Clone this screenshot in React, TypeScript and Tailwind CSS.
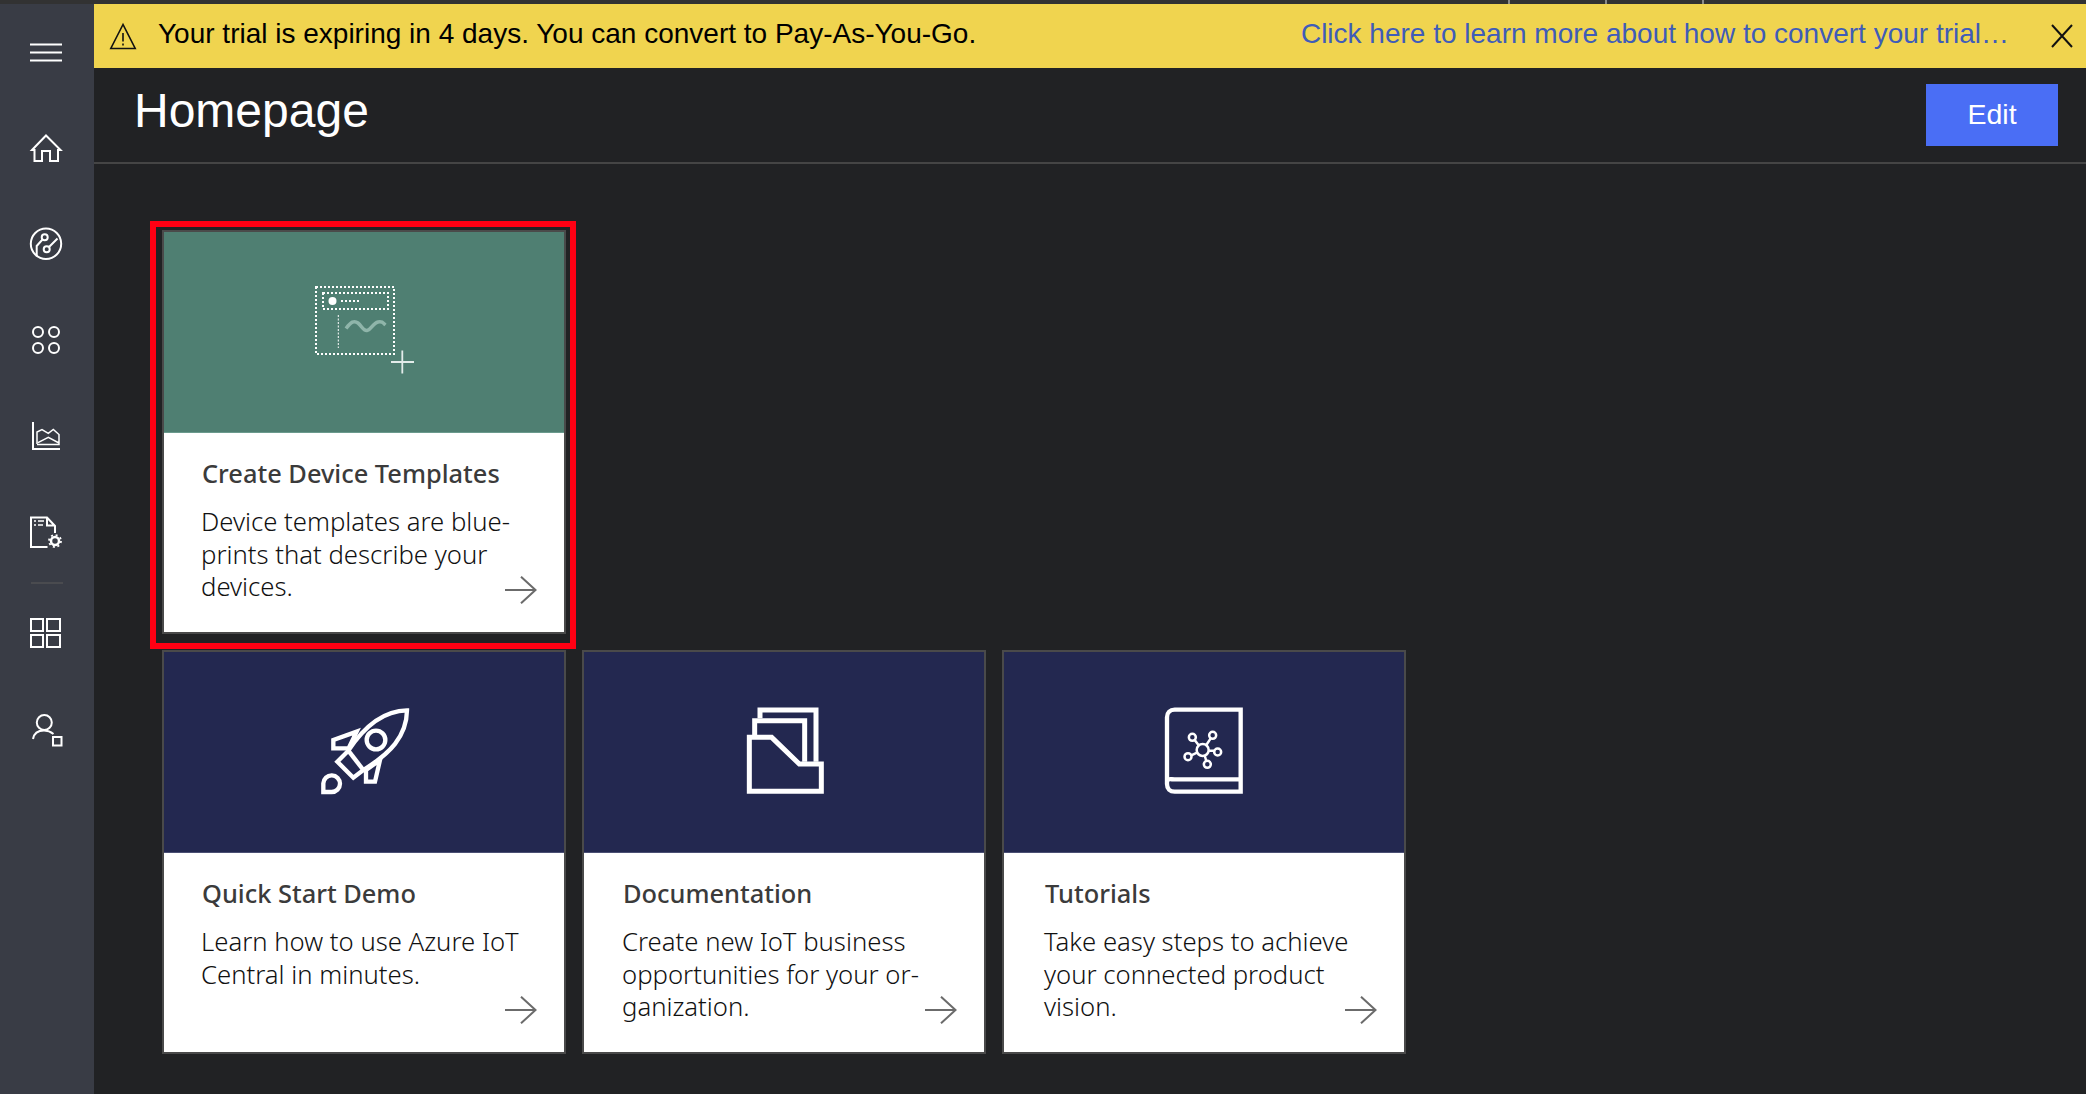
import type { ReactNode } from 'react';

const NavIcon = ({ cy, children }: { cy: number; children: ReactNode }) => (
	<div className="flex h-24 items-center justify-center">
		<svg width="40" height="40" viewBox={`27 ${cy - 20} 40 40`} fill="none" stroke="white" strokeWidth="2">
			{children}
		</svg>
	</div>
);

const Arrow = () => (
	<svg className="mb-[28px] mr-[27px] shrink-0 self-end" width="32" height="28" viewBox="0 0 32 28" fill="none" stroke="#6b6b6b" strokeWidth="2">
		<path d="M0 14H30.500M16 .7 30.500 14 16 27.300" />
	</svg>
);

type CardProps = {
	title: string;
	lines: string[];
	headerClass: string;
	textClass: string;
	icon: ReactNode;
	highlighted?: boolean;
};

const Card = ({ title, lines, headerClass, textClass, icon, highlighted }: CardProps) => (
	<div className="relative h-[404px] w-[404px] border-2 border-[#4a4a4a] bg-white">
		<div className={`h-[201px] border-b ${headerClass}`}>{icon}</div>
		<div className="flex h-[199px]">
			<div className={`min-w-0 flex-1 whitespace-nowrap pt-[22px] font-['Noto_Sans',sans-serif] ${textClass}`}>
				<h3 className="pl-px text-[25.400px] font-medium leading-9 text-[#3b3b3b]">{title}</h3>
				<p className="mt-[15px] text-[25.700px] font-light leading-[32.500px] text-[#111111]">
					{lines.map((line) => (
						<span key={line} className="block">
							{line}
						</span>
					))}
				</p>
			</div>
			<Arrow />
		</div>
		{highlighted && <div className="pointer-events-none absolute -bottom-[17px] -left-[14px] -right-[12px] -top-[11px] border-[6px] border-[#ff0013]" />}
	</div>
);

const TemplateIcon = () => (
	<svg width="110" height="100" viewBox="310 280 110 100" fill="none">
		<g stroke="white" strokeWidth="2" strokeDasharray="2 2">
			<rect x="316" y="287" width="78" height="67" />
			<rect x="323" y="293" width="65" height="16" />
			<path d="M341 301H359" />
		</g>
		<path d="M338.300 315V348" stroke="white" strokeWidth="1" strokeDasharray="2 1.500" />
		<circle cx="332.500" cy="301" r="4" fill="white" />
		<path d="M346 328.500C351 322 354 320 358 323S363 331 367 330.500 373 323 378 322 383 323 385.500 325" stroke="#8fb5aa" strokeWidth="3.500" />
		<path d="M402.300 350.500V373.500M391 362H414" stroke="#e3ecea" strokeWidth="1.800" />
	</svg>
);

const RocketIcon = () => (
	<svg width="160" height="130" viewBox="0 0 480 390" fill="none" stroke="white" strokeWidth="13">
		<path d="M381 91C320 92 262 125 205 212L172 245 220 293 250 270C330 220 380 170 381 91Z" />
		<path d="M205 207 230 155 160 180V205H205ZM300 240 258 270V305H285Z" />
		<path d="M205 212 250 270" />
		<circle cx="288" cy="180" r="28" />
		<path d="M130 336V310A25 25 0 1 1 155 336Z" />
	</svg>
);

const FolderIcon = () => (
	<svg width="130" height="120" viewBox="0 0 390 360" fill="none" stroke="white" strokeWidth="15">
		<path d="M88 304V142H155L238 222H304V304Z" />
		<path d="M104 135V92H254V215" />
		<path d="M120 85V60H288V215" />
	</svg>
);

const BookIcon = () => (
	<svg width="130" height="120" viewBox="0 0 390 360" fill="none" stroke="white">
		<g strokeWidth="13">
			<path d="M305 59H107C93 59 84 68 84 82V282C84 297 93 305 107 305H305Z" />
			<path d="M84 270C90 266 95 268 107 268H305" />
		</g>
		<g strokeWidth="7.500">
			<circle cx="191" cy="180" r="18" />
			<circle cx="160" cy="142" r="10.500" />
			<circle cx="221" cy="136" r="10.500" />
			<circle cx="236" cy="186" r="10.500" />
			<circle cx="205" cy="223" r="10.500" />
			<circle cx="147" cy="200" r="10.500" />
			<path d="M167 150 179 166M215 145 202 165M209 182H226M197 197 202 213M174 188 157 196" />
		</g>
	</svg>
);

export default function App() {
	return (
		<div className="flex h-screen w-screen flex-col overflow-hidden bg-[#212224]">
			<div className="flex h-1 shrink-0 bg-[#323232] pl-[1508px]">
				<div className="w-[97px] border-l-2 border-[#8a8a8a]" />
				<div className="w-[97px] border-l-2 border-[#8a8a8a]" />
				<div className="w-[97px] border-l-2 border-[#8a8a8a]" />
			</div>
			<div className="flex min-h-0 flex-1">
				<nav className="w-[94px] shrink-0 bg-[#393c45]">
					<NavIcon cy={52}>
						<path d="M30 44.500H62M30 52.500H62M30 60.500H62" />
					</NavIcon>
					<NavIcon cy={148}>
						<path d="M32 150 46 135.500 60.500 150H58V161H50V151H42V161H34.500V150Z" />
					</NavIcon>
					<NavIcon cy={244}>
						<circle cx="46" cy="243.700" r="15.200" />
						<circle cx="44.700" cy="237.300" r="3" />
						<circle cx="46.700" cy="249.300" r="3" />
						<path d="M49 247 57.500 238.500M42.500 239.500 36.700 246V256.500" />
					</NavIcon>
					<NavIcon cy={340}>
						<circle cx="38" cy="332" r="5" />
						<circle cx="54" cy="332" r="5" />
						<circle cx="38" cy="348" r="5" />
						<circle cx="54" cy="348" r="5" />
					</NavIcon>
					<NavIcon cy={436}>
						<path d="M33 422V449H60" />
						<path d="M37 444V432L42 429.500 48.300 433.300 53.300 429.500 59 434.500V444.500H37M38 442.700 48.300 437.300 59 443" strokeWidth="1.500" />
					</NavIcon>
					<NavIcon cy={532}>
						<path d="M47.500 547H31V517.500H47L55 526V533M47 517.500V525.500H55" />
						<path d="M34 521H36M38 521H44M34 525H36M38 525H43" strokeWidth="1.500" />
						<circle cx="55" cy="541" r="4" strokeWidth="2.500" />
						<circle cx="55" cy="541" r="6" strokeWidth="1.800" strokeDasharray="2 2.700" />
					</NavIcon>
					<div className="mx-auto mb-px mt-0.5 h-0.5 w-8 bg-[#4a4b4f]" />
					<NavIcon cy={633}>
						<path d="M31 619H43V631H31ZM47 619H60V631H47ZM31 635H43V647H31ZM47 635H60V647H47Z" />
					</NavIcon>
					<NavIcon cy={729}>
						<circle cx="44.300" cy="722.500" r="7.500" />
						<path d="M33 739C34 733 38 730.500 44 730.500 48 730.500 51 732 53.500 734" />
						<path d="M53 737H61.500V745.500H53Z" />
					</NavIcon>
				</nav>
				<main className="min-w-0 flex-1">
					<div className="flex h-16 items-center bg-[#f0d44f] font-['Liberation_Sans',sans-serif] text-[28px]">
						<svg className="ml-[15px] shrink-0" width="28" height="28" viewBox="0 0 28 28" fill="none" stroke="#111" strokeWidth="1.600">
							<path d="M14 2.500 1.800 26.500H26.200Z" />
							<path d="M14 11V19.500M14 21.500V23.500" />
						</svg>
						<span className="ml-[21px] pb-[5px] text-black">Your trial is expiring in 4 days. You can convert to Pay-As-You-Go.</span>
						<a className="ml-auto pb-[5px] text-[#3f5cb8]">Click here to learn more about how to convert your trial…</a>
						<svg className="ml-[41px] mr-3 shrink-0" width="24" height="26" viewBox="0 0 24 26" fill="none" stroke="#111" strokeWidth="2">
							<path d="M2 2 22 24M22 2 2 24" />
						</svg>
					</div>
					<header className="flex h-24 items-start justify-between border-b-2 border-[#454545] font-['Liberation_Sans',sans-serif]">
						<h1 className="ml-[40px] pt-[19px] text-[48px] leading-[48px] text-white">Homepage</h1>
						<button className="mr-7 mt-4 h-[62px] w-[132px] bg-[#4a6ef5] pb-0.5 text-[28.500px] text-white">Edit</button>
					</header>
					<div className="grid grid-cols-[404px_404px_404px] gap-4 pl-[68px] pt-[66px]">
						<Card
							highlighted
							title="Create Device Templates"
							lines={['Device templates are blue-', 'prints that describe your', 'devices.']}
							headerClass="border-[#6a9a8d] bg-[#4f7f72] pl-[146px] pt-12"
							textClass="pl-[37px]"
							icon={<TemplateIcon />}
						/>
						<div className="col-span-2" />
						<Card
							title="Quick Start Demo"
							lines={['Learn how to use Azure IoT', 'Central in minutes.']}
							headerClass="border-[#4a4f73] bg-[#232850] pl-[116px] pt-7"
							textClass="pl-[37px]"
							icon={<RocketIcon />}
						/>
						<Card
							title="Documentation"
							lines={['Create new IoT business', 'opportunities for your or-', 'ganization.']}
							headerClass="border-[#4a4f73] bg-[#232850] pl-[136px] pt-[38px]"
							textClass="pl-[38px]"
							icon={<FolderIcon />}
						/>
						<Card
							title="Tutorials"
							lines={['Take easy steps to achieve', 'your connected product', 'vision.']}
							headerClass="border-[#4a4f73] bg-[#232850] pl-[135px] pt-[38px]"
							textClass="pl-[40px]"
							icon={<BookIcon />}
						/>
					</div>
				</main>
			</div>
		</div>
	);
}
